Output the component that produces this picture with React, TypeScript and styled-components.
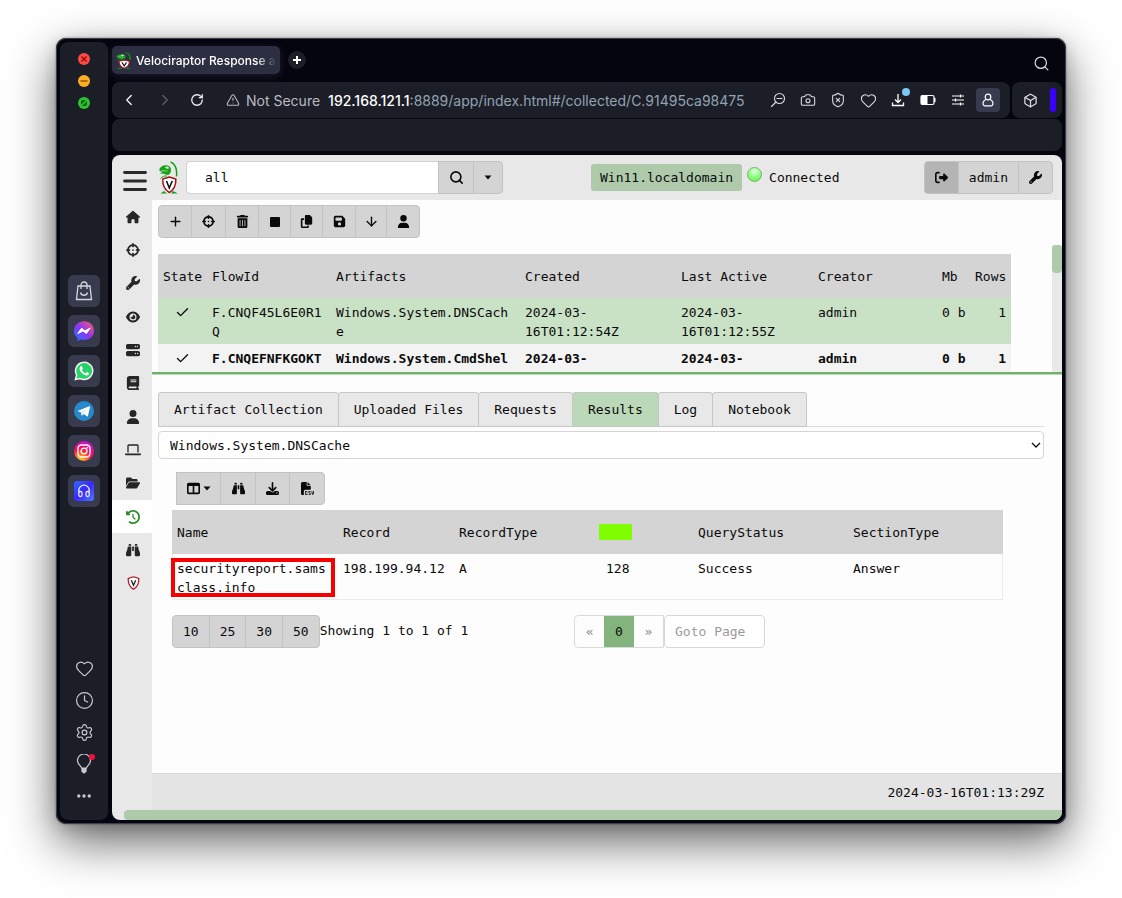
import React from "react";
import styled, { createGlobalStyle, css } from "styled-components";
import {
  FaBinoculars, FaBook, FaClockRotateLeft, FaCopy, FaCrosshairs, FaDownload, FaEye, FaFileCsv,
  FaFloppyDisk, FaFolderOpen, FaHouse, FaRightFromBracket, FaServer, FaTableColumns, FaTrashCan,
  FaUser, FaWrench,
} from "react-icons/fa6";
import {
  ArrowDown, Box, Camera, Check, ChevronLeft, ChevronRight, Clock, Ellipsis, Heart, Plus, RotateCw,
  Search, Settings, ShieldX, TriangleAlert,
} from "lucide-react";

const mono = `"DejaVu Sans Mono", "Liberation Mono", monospace`;
const sans = `Inter, "Liberation Sans", sans-serif`;

const GlobalStyle = createGlobalStyle`
  * { box-sizing: border-box; }
  body { margin: 0; background: #fff; }
  button, input, select { font: inherit; color: inherit; }
  button { cursor: pointer; }
  svg { display: block; flex: none; }
`;

/* ---------- browser window ---------- */

const Desktop = styled.div`
  display: flex;
  min-height: 100vh;
  padding: 38px 56px 74px;
  overflow: hidden;
`;

const BrowserWindow = styled.div`
  flex: 1;
  min-width: 0;
  display: flex;
  gap: 4px;
  padding: 4px;
  border-radius: 10px;
  background: #04050f;
  box-shadow: inset 0 0 0 1px #3d3e47, 0 0 2px rgba(0, 0, 0, 0.5), 0 4px 16px rgba(0, 0, 0, 0.15), 0 18px 48px rgba(0, 0, 0, 0.6);
`;

const Dock = styled.aside`
  width: 48px;
  flex: none;
  display: flex;
  flex-direction: column;
  align-items: center;
  justify-content: space-between;
  padding: 11px 0 14px;
  border-radius: 8px;
  background: #1c1e27;
`;

const DockGroup = styled.div<{ $gap: number }>`
  display: flex;
  flex-direction: column;
  align-items: center;
  gap: ${(p) => p.$gap}px;
`;

const DockApps = styled(DockGroup)`
  margin-top: 14px;
`;

const PlainButton = styled.button`
  display: flex;
  align-items: center;
  justify-content: center;
  padding: 0;
  border: 0;
  background: none;
`;

const DockButton = styled(PlainButton)`
  position: relative;
  width: 20px;
  height: 20px;
  color: #c9cad1;
`;

const AppTile = styled(PlainButton)`
  width: 32px;
  height: 32px;
  border-radius: 6px;
  background: #383a4e;
`;

const AlertDot = styled.span`
  position: absolute;
  top: 0;
  right: -1px;
  width: 6px;
  height: 6px;
  border-radius: 50%;
  background: #fa0c3c;
`;

const Main = styled.div`
  flex: 1;
  min-width: 0;
  display: flex;
  flex-direction: column;
`;

const TabStrip = styled.div`
  display: flex;
  align-items: center;
  height: 40px;
  padding: 0 12px 4px 0;
  font-family: ${sans};
`;

const BrowserTab = styled.div`
  display: flex;
  align-items: center;
  gap: 4px;
  width: 168px;
  height: 28px;
  padding: 0 4px;
  border-radius: 5px;
  background: #2c2e42;
  box-shadow: 0 2px 8px rgba(60, 62, 90, 0.4);
  color: #fff;
  font-size: 12px;
  font-weight: 500;
`;

const TabTitle = styled.span`
  flex: 1;
  white-space: nowrap;
  mask-image: linear-gradient(90deg, #000 86%, transparent);
`;

const NewTab = styled(PlainButton)`
  width: 18px;
  height: 18px;
  margin-left: 8px;
  border-radius: 50%;
  background: #1d1e27;
`;

const TabSearch = styled(PlainButton)`
  margin: 7px 0 0 auto;
  color: #dcdde2;
`;

const AddressRow = styled.div`
  display: flex;
  gap: 2px;
  height: 36px;
  margin-bottom: 1px;
`;

const AddressBar = styled.div`
  flex: 1;
  min-width: 0;
  display: flex;
  align-items: center;
  padding: 0 7px 0 0;
  border-radius: 8px;
  background: #1c1e27;
  color: #e8e8ec;
  font-family: ${sans};
  font-size: 14px;
`;

const NavButton = styled(PlainButton)<{ $width: number; $dim?: boolean }>`
  width: ${(p) => p.$width}px;
  height: 30px;
  color: ${(p) => (p.$dim ? "#5b5d68" : "#f2f2f5")};
`;

const Security = styled.span`
  display: flex;
  align-items: center;
  gap: 6px;
  margin-left: 16px;
  color: #b9bbc4;
  white-space: nowrap;
`;

const Url = styled.span`
  flex: 1;
  min-width: 0;
  margin-left: 8px;
  overflow: hidden;
  white-space: nowrap;
  color: #92a3b1;
`;

const UrlHost = styled.strong`
  color: #fff;
  font-weight: 500;
`;

const BarIcon = styled(PlainButton)<{ $boxed?: boolean }>`
  position: relative;
  width: 24px;
  height: 24px;
  flex: none;
  margin: 0 3px;
  border-radius: 4px;
  color: #dcdde2;
  background: ${(p) => (p.$boxed ? "#383a50" : "none")};
`;

const DownloadDot = styled.span`
  position: absolute;
  top: 0;
  right: 0;
  width: 8px;
  height: 8px;
  border-radius: 50%;
  background: #7cc8f5;
`;

const ExtensionBar = styled.div`
  display: flex;
  align-items: center;
  gap: 5px;
  width: 50px;
  padding-left: 3px;
  border-radius: 8px;
  background: #1c1e27;
`;

const Accent = styled.span`
  width: 6px;
  height: 24px;
  border-radius: 3px;
  background: #3a00ff;
`;

const BookmarkBar = styled.div`
  height: 32px;
  margin-bottom: 4px;
  border-radius: 8px;
  background: #1c1e27;
`;

/* ---------- application ---------- */

const AppFrame = styled.div`
  flex: 1;
  display: flex;
  flex-direction: column;
  overflow: hidden;
  border-radius: 8px;
  background: #e8e8e8;
  color: #0a0a0a;
  font-family: ${mono};
  font-size: 13px;
  line-height: 19px;
`;

const Header = styled.header`
  display: flex;
  align-items: center;
  height: 45px;
  padding: 0 9px 0 11px;
`;

const Hamburger = styled(PlainButton)`
  margin-top: 7px;
  margin-right: 12px;
`;

const SearchForm = styled.form`
  display: flex;
  width: 317px;
  margin-left: 7px;
`;

const SearchInput = styled.input`
  flex: 1;
  min-width: 0;
  height: 33px;
  padding: 0 18px;
  border: 1px solid #d2d2d2;
  border-right: 0;
  border-radius: 4px 0 0 4px;
  background: #fff;
  outline: 0;
`;

const ButtonGroup = styled.div`
  display: flex;
`;

const GroupButton = styled.button<{ $dark?: boolean; $width?: number; $square?: boolean }>`
  display: flex;
  align-items: center;
  justify-content: center;
  gap: 3px;
  width: ${(p) => (p.$width ? `${p.$width}px` : "auto")};
  height: 33px;
  margin-left: -1px;
  padding: 0 ${(p) => (p.$width ? 0 : 10)}px;
  border: 1px solid #c3c3c3;
  background: ${(p) => (p.$dark ? "#b4b4b4" : "#d4d4d4")};

  &:first-child {
    margin-left: 0;
    border-radius: ${(p) => (p.$square ? "0" : "4px 0 0 4px")};
  }
  &:last-child {
    border-radius: 0 4px 4px 0;
  }
`;

const Status = styled.div`
  display: flex;
  align-items: center;
  margin-left: 88px;
  white-space: nowrap;
`;

const ClientBadge = styled.a`
  padding: 4px 9px;
  border-radius: 3px;
  background: #aecaab;
  color: inherit;
  text-decoration: none;
`;

const Led = styled.span`
  width: 15px;
  height: 15px;
  margin: 0 7px 6px 5px;
  border: 1px solid #7fae7b;
  border-radius: 50%;
  background: radial-gradient(circle at 50% 28%, #e4ffdf, #7dff6e 60%, #55ee45);
`;

const UserGroup = styled(ButtonGroup)`
  margin-left: auto;
`;

const Body = styled.div`
  flex: 1;
  display: flex;
`;

const SideNav = styled.nav`
  width: 40px;
  height: 400px;
  flex: none;
  display: grid;
  grid-template-rows: repeat(12, 1fr);
  font-size: 14px;
`;

const NavLink = styled.a<{ $active?: boolean }>`
  display: flex;
  align-items: center;
  justify-content: center;
  padding-left: 2px;
  color: ${(p) => (p.$active ? "#2c8b2a" : "#262626")};
  background: ${(p) => (p.$active ? "#fff" : "none")};
`;

const Workspace = styled.div`
  flex: 1;
  min-width: 0;
  display: flex;
  flex-direction: column;
`;

const FlowPane = styled.section`
  display: flex;
  height: 172px;
  overflow: hidden;
  background: #fdfdfd;
`;

const FlowScroll = styled.div`
  flex: 1;
  min-width: 0;
  padding: 5px 41px 0 6px;
`;

const ScrollTrack = styled.div`
  width: 10px;
  padding-top: 45px;
  background: linear-gradient(#fdfdfd 45px, #e8e8e8 45px);
`;

const ScrollThumb = styled.div`
  height: 28px;
  border-radius: 4px;
  background: #aecaab;
`;

const Splitter = styled.div`
  height: 3px;
  background: linear-gradient(#6fb36b 2px, #b7d9b5 2px);
`;

const Grid = styled.table`
  width: 100%;
  border-collapse: collapse;
  table-layout: fixed;
  text-align: left;
`;

const FlowGrid = styled(Grid)`
  margin-top: 16px;
`;

const Th = styled.th<{ $right?: boolean }>`
  height: 44px;
  padding: 0 5px;
  background: #d4d4d4;
  font-weight: 400;
  white-space: nowrap;
  text-align: ${(p) => (p.$right ? "right" : "left")};
`;

const Td = styled.td<{ $right?: boolean; $nowrap?: boolean; $indent?: boolean }>`
  position: relative;
  height: 46px;
  padding: 5px 5px 3px ${(p) => (p.$indent ? 12 : 5)}px;
  vertical-align: top;
  overflow-wrap: anywhere;
  white-space: ${(p) => (p.$nowrap ? "nowrap" : "normal")};
  text-align: ${(p) => (p.$right ? "right" : "left")};
`;

const CheckCell = styled(Td)`
  svg {
    height: 19px;
    margin: 0 auto;
  }
`;

const FlowRow = styled.tr<{ $selected?: boolean }>`
  background: ${(p) => (p.$selected ? "#c9e1c5" : "#f3f3f3")};
  font-weight: ${(p) => (p.$selected ? 400 : 700)};
`;

const DetailPane = styled.section`
  flex: 1;
  padding: 17px 18px 0 6px;
  background: #fdfdfd;
`;

const Tabs = styled.div`
  display: flex;
  height: 35px;
  box-shadow: inset 0 -1px #dcdcdc;
`;

const Tab = styled.button<{ $active?: boolean }>`
  margin-left: -1px;
  padding: 0 15px;
  border: 1px solid #c6c6c6;
  border-radius: 3px 3px 0 0;
  background: ${(p) => (p.$active ? "#bbd9b8" : "#e8e8e8")};

  &:first-child {
    margin-left: 0;
  }
`;

const SelectBox = styled.label`
  position: relative;
  display: block;
  margin-top: 4px;

  svg {
    position: absolute;
    right: 3px;
    top: 10px;
    pointer-events: none;
  }
`;

const ArtifactSelect = styled.select`
  appearance: none;
  display: block;
  width: 100%;
  height: 28px;
  padding: 0 11px;
  border: 1px solid #d6d6d6;
  border-radius: 4px;
  background: #fff;
`;

const Results = styled.div`
  padding: 13px 41px 0 14px;
`;

const ResultTools = styled(ButtonGroup)`
  margin: 0 0 5px 4px;
`;

const ResultGrid = styled(Grid)`
  box-shadow: inset 0 0 0 1px #ebebeb;
`;

const Redacted = styled.span`
  display: block;
  width: 33px;
  height: 16px;
  background: #80ff00;
`;

const Highlight = styled.span`
  position: absolute;
  inset: 4px 3px 3px -1px;
  border: 4px solid #f60000;
`;

const Paging = styled.div`
  display: grid;
  grid-template-columns: 402px 1fr;
  margin-top: 15px;
`;

const PagingPart = styled.div`
  display: flex;
  line-height: 31px;
`;

const PageList = styled.nav`
  display: flex;
  width: 90px;
  border: 1px solid #dadada;
  border-radius: 4px 0 0 4px;
  overflow: hidden;
`;

const PageLink = styled.a<{ $active?: boolean }>`
  flex: 1;
  text-align: center;
  text-decoration: none;
  color: ${(p) => (p.$active ? "#0a0a0a" : "#8a8a8a")};
  ${(p) => p.$active && css`
    background: #84b47d;
  `}
`;

const GotoInput = styled.input`
  width: 101px;
  height: 33px;
  padding: 0 10px;
  border: 1px solid #d6d6d6;
  border-radius: 4px;
  background: #fff;

  &::placeholder {
    color: #9b9b9b;
    opacity: 1;
  }
`;

const Footer = styled.footer`
  display: flex;
  align-items: center;
  justify-content: flex-end;
  height: 37px;
  padding-right: 18px;
  border-top: 1px solid #d9d9d9;
  background: #e4e4e4;
`;

const BottomScroll = styled.div`
  height: 10px;
  margin-left: 12px;
  border-radius: 4px 0 0 4px;
  background: #aecaab;
`;

/* ---------- drawings ---------- */

const Raptor = ({ width, height }: { width: number; height: number }) => (
  <svg width={width} height={height} viewBox="0 0 20 33" preserveAspectRatio="none" aria-hidden="true">
    <path d="M11.500 1c3 .8 7 4.500 6 14.500" fill="none" stroke="#16a016" strokeWidth="1.500" />
    <path d="M.5 7.500C2.500 4.500 6 3.500 9 4.500c2 .5 3 2.500 3 4.500s-1 4.500-3 5c-1.500 0-3-.5-4-1.200L.8 12.500c1-1 2.200-1.200 3.200-1.500L.5 10z" fill="#16a016" />
    <path d="M6 6.500l3.200-.8v2zM2.500 9.500l6 .6" fill="#e8f4e6" stroke="#e8f4e6" strokeWidth=".6" />
    <path d="M1.500 17.500l3.500-2.500h3" fill="none" stroke="#16a016" strokeWidth="1" />
    <path d="M1.500 32.500l3.500-2.500 3 2.500zM12 32.500l2-2.500 5 2.500z" fill="#16a016" />
    <path d="M10.300 16L16.800 18C17.100 24 15.300 28.500 10.300 31.500 5.300 28.500 3.500 24 3.800 18z" fill="#fff" stroke="#a3121b" strokeWidth="1.500" />
    <path d="M7.500 20l2.800 7 2.900-7" fill="none" stroke="#111" strokeWidth="1.600" />
  </svg>
);

const Shield = () => (
  <svg width="13" height="14" viewBox="0 0 13 14" aria-hidden="true">
    <path d="M6.500.8l5.300 1.700c.2 4.500-1 8.300-5.300 10.700C2.200 10.800 1 7 1.200 2.500z" fill="#fff" stroke="#b01020" strokeWidth="1.200" />
    <path d="M4.300 4.300l2.200 5 2.200-5" fill="none" stroke="#222" strokeWidth="1.300" />
  </svg>
);

const Laptop = () => (
  <svg width="16" height="12" viewBox="0 0 16 12" fill="none" stroke="currentColor" aria-hidden="true">
    <path d="M3 8.500V1.800c0-.5.300-.8.800-.8h8.400c.5 0 .8.300.8.800v6.700" strokeWidth="1.300" />
    <path d="M.8 10.300h14.400" strokeWidth="1.800" strokeLinecap="round" />
  </svg>
);

const Caret = () => (
  <svg width="8" height="5" viewBox="0 0 8 5" aria-hidden="true">
    <path d="M.5.500h7L4 4.500z" fill="currentColor" />
  </svg>
);

const Stop = () => (
  <svg width="10" height="10" viewBox="0 0 10 10" aria-hidden="true">
    <rect width="10" height="10" rx="1" fill="currentColor" />
  </svg>
);

const lights = [
  { label: "Close", fill: "#ff4a43", mark: <path d="M3.500 3.500l5 5M8.500 3.500l-5 5" stroke="#7c0f0c" strokeWidth="1.100" /> },
  { label: "Minimize", fill: "#fdaf24", mark: <path d="M2.500 6h7" stroke="#8f5a06" strokeWidth="1.500" /> },
  { label: "Zoom", fill: "#2cc32e", mark: <path d="M3 7.800V5.200C3 4 4 3 5.200 3h2.600zM9 4.200v2.600C9 8 8 9 6.800 9H4.200z" fill="#0a5c10" /> },
];

const Bag = () => (
  <svg width="18" height="20" viewBox="0 0 18 20" fill="none" stroke="#d5d6dc" strokeWidth="1.300">
    <path d="M3 5h12l1.500 13.500h-15zM6 8V4a3 3 0 016 0v4" />
    <path d="M5.500 11.500a3.600 3.600 0 007 0" />
  </svg>
);

const Messenger = () => (
  <svg width="20" height="20" viewBox="0 0 20 20">
    <defs>
      <linearGradient id="msg" x1="0" y1="1" x2="1" y2="0">
        <stop offset="0" stopColor="#1478ff" /><stop offset=".5" stopColor="#9034f5" /><stop offset="1" stopColor="#ff5f5c" />
      </linearGradient>
    </defs>
    <path d="M10 .3c5.600 0 10 4.100 10 9.400S15.600 19 10 19c-1 0-2-.1-3-.4L3.500 20v-3C1.300 15.300 0 12.700 0 9.700 0 4.400 4.400.3 10 .3z" fill="url(#msg)" />
    <path d="M3.800 12.600l3.700-5.400 3.400 2.600 5.300-2.700-3.800 5.400L9 9.900z" fill="#fff" stroke="#fff" strokeLinejoin="round" />
  </svg>
);

const Whatsapp = () => (
  <svg width="20" height="20" viewBox="0 0 20 20">
    <path d="M1.400 18.600L2.600 14A8.600 8.600 0 1110 18.500a9 9 0 01-4-1z" fill="#25d366" stroke="#f2f2f2" strokeWidth="1.500" />
    <path d="M6.500 5.500c.5-.6 1.200-.5 1.500 0l.8 1.900c.1.600-.9 1.200-.9 1.600.8 1.500 2 2.600 3.500 3.200.5 0 1-1.200 1.500-1.200l2 1c.5.400-.1 1.600-.7 2-1.500 1-3.700.1-5.200-.9C7.500 12 5.700 9.800 5.600 8c0-1 .4-2 .9-2.500z" fill="#fff" />
  </svg>
);

const Telegram = () => (
  <svg width="20" height="20" viewBox="0 0 20 20">
    <circle cx="10" cy="10" r="10" fill="#2589cc" />
    <path d="M3.500 10L15.200 5.300c.6-.2 1 .2.800.8L14 14.800c-.2.700-.7.800-1.200.4l-3-2.200-1.500 1.500c-.3.200-.6.100-.7-.3l-.9-2.900z" fill="#fff" />
    <path d="M7.500 11.300l5.700-3.800-4.500 4.600-.5 2z" fill="#bcd9ee" />
  </svg>
);

const Instagram = () => (
  <svg width="20" height="20" viewBox="0 0 20 20">
    <defs>
      <radialGradient id="insta" cx=".3" cy="1" r="1.100">
        <stop offset="0" stopColor="#ffd23e" /><stop offset=".25" stopColor="#ff8a1f" /><stop offset=".55" stopColor="#ff0a50" /><stop offset="1" stopColor="#b416f5" />
      </radialGradient>
    </defs>
    <circle cx="10" cy="10" r="10" fill="url(#insta)" />
    <g fill="none" stroke="#fff" strokeWidth="1.400">
      <rect x="4" y="4" width="12" height="12" rx="3.500" /><circle cx="10" cy="10" r="2.900" />
    </g>
    <circle cx="13.400" cy="6.600" r=".9" fill="#fff" />
  </svg>
);

const Player = () => (
  <svg width="20" height="20" viewBox="0 0 20 20">
    <defs>
      <linearGradient id="play" x1="0" y1="0" x2="1" y2="1">
        <stop offset="0" stopColor="#2f6bff" /><stop offset=".5" stopColor="#3c28ff" /><stop offset="1" stopColor="#4a7dff" />
      </linearGradient>
    </defs>
    <rect width="20" height="20" rx="3" fill="url(#play)" />
    <path d="M4.800 11.500V9.300a5.200 5.200 0 0110.400 0v2.200" fill="none" stroke="#e6e8ff" strokeWidth="1.400" />
    <g fill="none" stroke="#e6e8ff" strokeWidth="1.300">
      <rect x="4.800" y="10.500" width="3.200" height="5" rx="1.500" /><rect x="12" y="10.500" width="3.200" height="5" rx="1.500" />
    </g>
  </svg>
);

const Bulb = () => (
  <svg width="16" height="20" viewBox="0 0 16 20" fill="none" stroke="currentColor" strokeWidth="1.200">
    <path d="M5.500 14c0-2-4-3.500-4-7.500a6.500 6.500 0 0113 0c0 4-4 5.500-4 7.500z" />
    <path d="M6 14.500h4v3L8 19l-2-1.500z" fill="currentColor" />
  </svg>
);

const ZoomOut = () => (
  <svg width="16" height="16" viewBox="0 0 16 16" fill="none" stroke="currentColor" strokeWidth="1.100">
    <circle cx="9.500" cy="6.500" r="5" /><path d="M6 10L1.500 14.500M7 6.500h5" strokeLinecap="round" />
  </svg>
);

const Tray = () => (
  <svg width="14" height="14" viewBox="0 0 14 14" fill="none" stroke="#fff" strokeWidth="1.300">
    <path d="M7 1v8M4 6.500l3 3 3-3M1.500 9.500V12.500h11V9.500" />
  </svg>
);

const Battery = () => (
  <svg width="16" height="12" viewBox="0 0 16 12">
    <rect x="1" y="1.500" width="13" height="9" rx="1.500" fill="none" stroke="#fff" strokeWidth="1.200" />
    <path d="M1 1.500h6.500v9H1zM14 4h1.500v4H14z" fill="#fff" />
  </svg>
);

const Sliders = () => (
  <svg width="14" height="12" viewBox="0 0 14 12" stroke="#fff" strokeWidth="1.200">
    <path d="M1 2h12M1 6h12M1 10h12M9.500 .5v3M4.500 4.500v3M9.500 8.500v3" />
  </svg>
);

const Person = () => (
  <svg width="14" height="16" viewBox="0 0 14 16" fill="none" stroke="#fff" strokeWidth="1.200">
    <circle cx="7" cy="5" r="2.800" /><path d="M5 7.500C2.500 8.500 1.500 11 2.300 12.800c.3.700.8 1.100 1.500 1.100h6.400c.7 0 1.200-.4 1.500-1.100C12.500 11 11.500 8.500 9 7.500" />
  </svg>
);

const Chevron = () => (
  <svg width="10" height="8" viewBox="0 0 10 8" fill="none" stroke="#111" strokeWidth="1.300">
    <path d="M1 2l4 4 4-4" />
  </svg>
);

const ThinPlus = () => <Plus size={15} strokeWidth={2.200} />;
const ThinArrow = () => <ArrowDown size={15} strokeWidth={2.200} />;

/* ---------- data ---------- */

const dockApps = [
  ["Shopping", Bag], ["Messenger", Messenger], ["WhatsApp", Whatsapp],
  ["Telegram", Telegram], ["Instagram", Instagram], ["Player", Player],
] as const;

const navItems = [
  ["Home", FaHouse], ["Hunts", FaCrosshairs], ["Artifacts", FaWrench], ["Events", FaEye],
  ["Server", FaServer], ["Notebooks", FaBook], ["Users", FaUser], ["Host", Laptop],
  ["Files", FaFolderOpen], ["Collections", FaClockRotateLeft], ["Monitoring", FaBinoculars], ["Velociraptor", Shield],
] as const;

const flowTools = [
  ["New collection", ThinPlus, 34], ["Hunt", FaCrosshairs, 35], ["Delete", FaTrashCan, 34], ["Stop", Stop, 33],
  ["Copy", FaCopy, 33], ["Save", FaFloppyDisk, 34], ["Download", ThinArrow, 32], ["Owner", FaUser, 34],
] as const;

const flowColumns = [49, 124, 189, 156, 137, 124, 33, 41];
const flows = [
  { id: "F.CNQF45L6E0R1Q", artifact: "Windows.System.DNSCache", created: "2024-03-16T01:12:54Z", active: "2024-03-16T01:12:55Z", selected: true },
  { id: "F.CNQEFNFKGOKT", artifact: "Windows.System.CmdShel", created: "2024-03-", active: "2024-03-", selected: false },
];

const resultColumns = [166, 116, 140, 99, 155, 155];
const tabs = ["Artifact Collection", "Uploaded Files", "Requests", "Results", "Log", "Notebook"];

export default function App() {
  return (
    <Desktop>
      <GlobalStyle />
      <BrowserWindow>
        <Dock>
          <DockGroup $gap={10}>
            {lights.map((l) => (
              <PlainButton key={l.label} aria-label={l.label}>
                <svg width="12" height="12" viewBox="0 0 12 12">
                  <circle cx="6" cy="6" r="6" fill={l.fill} />
                  {l.mark}
                </svg>
              </PlainButton>
            ))}
          </DockGroup>
          <DockApps $gap={8}>
            {dockApps.map(([label, Icon]) => (
              <AppTile key={label} aria-label={label}><Icon /></AppTile>
            ))}
          </DockApps>
          <DockGroup $gap={12}>
            <DockButton aria-label="Favourites"><Heart size={19} strokeWidth={1.500} /></DockButton>
            <DockButton aria-label="History"><Clock size={19} strokeWidth={1.500} /></DockButton>
            <DockButton aria-label="Settings"><Settings size={19} strokeWidth={1.500} /></DockButton>
            <DockButton aria-label="Tips"><Bulb /><AlertDot /></DockButton>
            <DockButton aria-label="More"><Ellipsis size={18} strokeWidth={2.500} /></DockButton>
          </DockGroup>
        </Dock>

        <Main>
          <TabStrip>
            <BrowserTab>
              <Raptor width={16} height={17} />
              <TabTitle>Velociraptor Response a</TabTitle>
            </BrowserTab>
            <NewTab aria-label="New tab">
              <svg width="10" height="10" viewBox="0 0 10 10" stroke="#fff" strokeWidth="2"><path d="M5 1v8M1 5h8" /></svg>
            </NewTab>
            <TabSearch aria-label="Search tabs"><Search size={17} strokeWidth={1.700} /></TabSearch>
          </TabStrip>

          <AddressRow>
            <AddressBar>
              <NavButton $width={34} aria-label="Back"><ChevronLeft size={18} strokeWidth={1.800} /></NavButton>
              <NavButton $width={38} $dim aria-label="Forward"><ChevronRight size={18} strokeWidth={1.800} /></NavButton>
              <NavButton $width={26} aria-label="Reload"><RotateCw size={14} strokeWidth={2.200} /></NavButton>
              <Security><TriangleAlert size={14} strokeWidth={1.800} />Not Secure</Security>
              <Url><UrlHost>192.168.121.1</UrlHost>:8889/app/index.html#/collected/C.91495ca98475</Url>
              <BarIcon aria-label="Zoom out"><ZoomOut /></BarIcon>
              <BarIcon aria-label="Snapshot"><Camera size={16} strokeWidth={1.600} /></BarIcon>
              <BarIcon aria-label="Blocker"><ShieldX size={16} strokeWidth={1.600} /></BarIcon>
              <BarIcon aria-label="Bookmark"><Heart size={17} strokeWidth={1.500} /></BarIcon>
              <BarIcon aria-label="Downloads"><Tray /><DownloadDot /></BarIcon>
              <BarIcon aria-label="Battery"><Battery /></BarIcon>
              <BarIcon aria-label="Easy setup"><Sliders /></BarIcon>
              <BarIcon $boxed aria-label="Profile"><Person /></BarIcon>
            </AddressBar>
            <ExtensionBar>
              <BarIcon aria-label="Extensions"><Box size={15} strokeWidth={2} /></BarIcon>
              <Accent />
            </ExtensionBar>
          </AddressRow>
          <BookmarkBar />

          <AppFrame>
            <Header>
              <Hamburger aria-label="Menu">
                <svg width="24" height="22" viewBox="0 0 24 22" stroke="#2a2a2a" strokeWidth="2.800" strokeLinecap="round">
                  <path d="M1.500 2.500h21M1.500 11h21M1.500 19.500h21" />
                </svg>
              </Hamburger>
              <Raptor width={20} height={33} />
              <SearchForm onSubmit={(e) => e.preventDefault()}>
                <SearchInput aria-label="Search clients" defaultValue="all" />
                <ButtonGroup>
                  <GroupButton type="submit" $width={36} $square aria-label="Search"><Search size={15} strokeWidth={2.600} /></GroupButton>
                  <GroupButton type="button" $width={30} aria-label="Search options"><Caret /></GroupButton>
                </ButtonGroup>
              </SearchForm>
              <Status>
                <ClientBadge href="#client">Win11.localdomain</ClientBadge>
                <Led />
                Connected
              </Status>
              <UserGroup>
                <GroupButton $dark aria-label="Log out"><FaRightFromBracket /></GroupButton>
                <GroupButton>admin</GroupButton>
                <GroupButton aria-label="Preferences"><FaWrench /></GroupButton>
              </UserGroup>
            </Header>

            <Body>
              <SideNav>
                {navItems.map(([label, Icon]) => (
                  <NavLink key={label} href={`#${label}`} aria-label={label} $active={label === "Collections"}><Icon /></NavLink>
                ))}
              </SideNav>

              <Workspace>
                <FlowPane>
                  <FlowScroll>
                    <ButtonGroup>
                      {flowTools.map(([label, Icon, width]) => (
                        <GroupButton key={label} $width={width} aria-label={label}><Icon /></GroupButton>
                      ))}
                    </ButtonGroup>
                    <FlowGrid>
                      <colgroup>{flowColumns.map((w, i) => <col key={i} width={w} />)}</colgroup>
                      <thead>
                        <tr>
                          <Th>State</Th><Th>FlowId</Th><Th>Artifacts</Th><Th>Created</Th>
                          <Th>Last Active</Th><Th>Creator</Th><Th>Mb</Th><Th $right>Rows</Th>
                        </tr>
                      </thead>
                      <tbody>
                        {flows.map((f) => (
                          <FlowRow key={f.id} $selected={f.selected}>
                            <CheckCell><Check size={15} strokeWidth={2.200} /></CheckCell>
                            <Td>{f.id}</Td>
                            <Td>{f.artifact}</Td>
                            <Td>{f.created}</Td>
                            <Td>{f.active}</Td>
                            <Td>admin</Td>
                            <Td $nowrap>0 b</Td>
                            <Td $right>1</Td>
                          </FlowRow>
                        ))}
                      </tbody>
                    </FlowGrid>
                  </FlowScroll>
                  <ScrollTrack><ScrollThumb /></ScrollTrack>
                </FlowPane>
                <Splitter />

                <DetailPane>
                  <Tabs role="tablist">
                    {tabs.map((t) => (
                      <Tab key={t} role="tab" aria-selected={t === "Results"} $active={t === "Results"}>{t}</Tab>
                    ))}
                  </Tabs>
                  <SelectBox>
                    <ArtifactSelect aria-label="Artifact"><option>Windows.System.DNSCache</option></ArtifactSelect>
                    <Chevron />
                  </SelectBox>

                  <Results>
                    <ResultTools>
                      <GroupButton $square $width={45} aria-label="Columns"><FaTableColumns /><Caret /></GroupButton>
                      <GroupButton $width={36} aria-label="Inspect"><FaBinoculars /></GroupButton>
                      <GroupButton $width={35} aria-label="Download JSON"><FaDownload /></GroupButton>
                      <GroupButton $width={36} aria-label="Download CSV"><FaFileCsv /></GroupButton>
                    </ResultTools>
                    <ResultGrid>
                      <colgroup>{resultColumns.map((w, i) => <col key={i} width={w} />)}</colgroup>
                      <thead>
                        <tr>
                          <Th>Name</Th><Th>Record</Th><Th>RecordType</Th><Th><Redacted /></Th>
                          <Th>QueryStatus</Th><Th>SectionType</Th>
                        </tr>
                      </thead>
                      <tbody>
                        <tr>
                          <Td>securityreport.samsclass.info<Highlight /></Td>
                          <Td>198.199.94.12</Td>
                          <Td>A</Td>
                          <Td $indent>128</Td>
                          <Td>Success</Td>
                          <Td>Answer</Td>
                        </tr>
                      </tbody>
                    </ResultGrid>
                    <Paging>
                      <PagingPart>
                        <ButtonGroup>
                          {[10, 25, 30, 50].map((n) => <GroupButton key={n}>{n}</GroupButton>)}
                        </ButtonGroup>
                        Showing 1 to 1 of 1
                      </PagingPart>
                      <PagingPart>
                        <PageList aria-label="Pages">
                          <PageLink href="#previous">«</PageLink>
                          <PageLink href="#0" $active>0</PageLink>
                          <PageLink href="#next">»</PageLink>
                        </PageList>
                        <GotoInput aria-label="Goto Page" placeholder="Goto Page" />
                      </PagingPart>
                    </Paging>
                  </Results>
                </DetailPane>
                <Footer>2024-03-16T01:13:29Z</Footer>
              </Workspace>
            </Body>
            <BottomScroll />
          </AppFrame>
        </Main>
      </BrowserWindow>
    </Desktop>
  );
}
